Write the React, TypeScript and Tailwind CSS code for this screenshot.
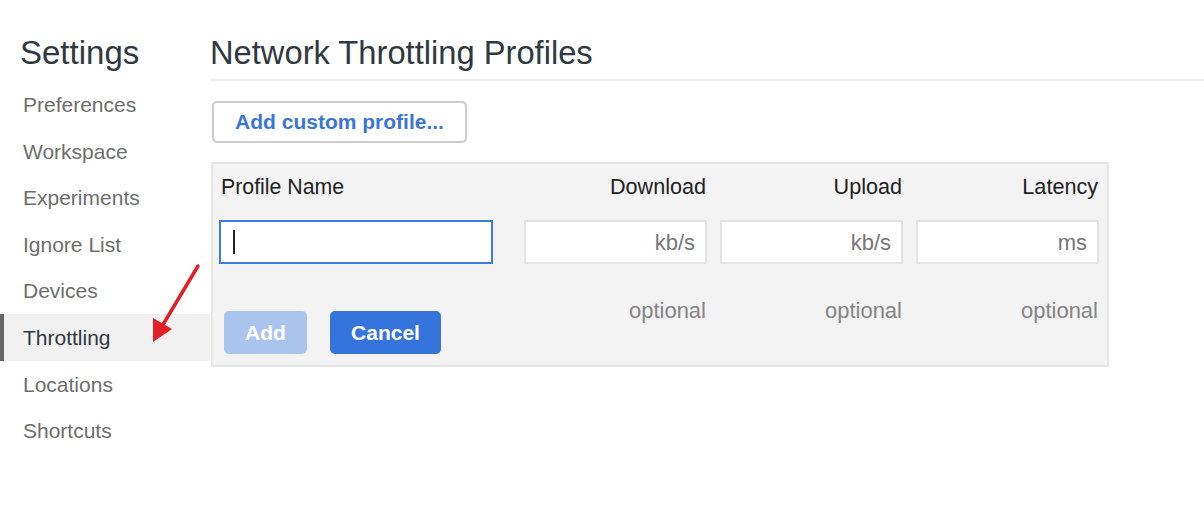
import React from 'react';

const NAV_ITEMS = [
    'Preferences',
    'Workspace',
    'Experiments',
    'Ignore List',
    'Devices',
    'Throttling',
    'Locations',
    'Shortcuts',
];

const NUM_COLUMNS = [
    { label: 'Download', unit: 'kb/s' },
    { label: 'Upload', unit: 'kb/s' },
    { label: 'Latency', unit: 'ms' },
];

function Sidebar() {
    return (
        <div className="w-[210px] shrink-0">
            <div className="h-[81px] pt-[33px] pl-[20px] text-[33px] leading-[40px] text-[#303942]">Settings</div>
            {NAV_ITEMS.map((item) => {
                const selected = item === 'Throttling';
                return (
                    <div
                        key={item}
                        className={`flex items-center h-[46.6px] pl-[23px] pt-[1px] text-[21px] ${selected ? 'bg-[#f1f1f1] text-[#303942] border-l-[4px] border-[#666666] !pl-[19px]' : 'text-[#6e6e6e]'
                            }`}
                    >
                        {item}
                    </div>
                );
            })}
        </div>
    );
}

function ProfileTable() {
    return (
        <div className="mt-[19px] ml-[1px] w-[898px] h-[205px] bg-[#f3f3f3] border-[2px] border-[#e6e6e6] flex pl-[6px] pt-[9px]">
            {/* Name column */}
            <div className="w-[274px] flex flex-col">
                <div className="h-[28px] leading-[28px] pl-[2px] text-[21.3px] text-[#222222]">Profile Name</div>
                <div className="mt-[19px] h-[44px] bg-white border-[2px] border-[#3b7be6] flex items-center pl-[12px]">
                    <div className="w-[2px] h-[24px] bg-[#222222]" />
                </div>
                <div className="mt-[47px] flex gap-[23px] pl-[5px]">
                    <button className="w-[83px] h-[43px] rounded-[5px] bg-[#aac4ee] text-white font-bold text-[21px]">Add</button>
                    <button className="w-[111px] h-[43px] rounded-[5px] bg-[#3574dc] text-white font-bold text-[21px]">Cancel</button>
                </div>
            </div>
            {/* Numeric columns */}
            <div className="flex ml-[31px] gap-[13px]">
                {NUM_COLUMNS.map((col) => (
                    <div key={col.label} className="w-[183px] flex flex-col items-end">
                        <div className="h-[28px] leading-[28px] pr-[1px] text-[21.6px] text-[#222222]">{col.label}</div>
                        <div className="mt-[19px] w-full h-[44px] bg-white border-[2px] border-[#e3e3e3] flex items-center justify-end pr-[10px] text-[22px] text-[#777777]">
                            {col.unit}
                        </div>
                        <div className="mt-[35px] h-[24px] leading-[24px] pr-[1px] text-[22px] text-[#858585]">optional</div>
                    </div>
                ))}
            </div>
        </div>
    );
}

export default function App() {
    return (
        <div
            className="relative w-[1204px] h-[522px] bg-white flex overflow-hidden"
            style={{ fontFamily: '"Liberation Sans", Arial, Helvetica, sans-serif' }}
        >
            <Sidebar />
            <div className="flex-1 flex flex-col">
                <div className="h-[81px] pt-[33px] border-b-[2px] border-[#eeeeee]">
                    <div className="text-[32.7px] leading-[40px] text-[#303942]">Network Throttling Profiles</div>
                </div>
                <div className="mt-[20px] ml-[2px]">
                    <button className="w-[255px] h-[42px] rounded-[5px] border-[2px] border-[#cccccc] bg-white text-[#3a75d8] font-bold text-[21px]">
                        Add custom profile...
                    </button>
                </div>
                <ProfileTable />
            </div>

            {/* red annotation arrow */}
            <svg className="absolute left-0 top-0 pointer-events-none" width="1204" height="522">
                <line x1="198" y1="266" x2="161" y2="328" stroke="#e41e26" strokeWidth="3.5" strokeLinecap="round" />
                <polygon points="153,342 153,318 172,329" fill="#e41e26" />
            </svg>
        </div>
    );
}
